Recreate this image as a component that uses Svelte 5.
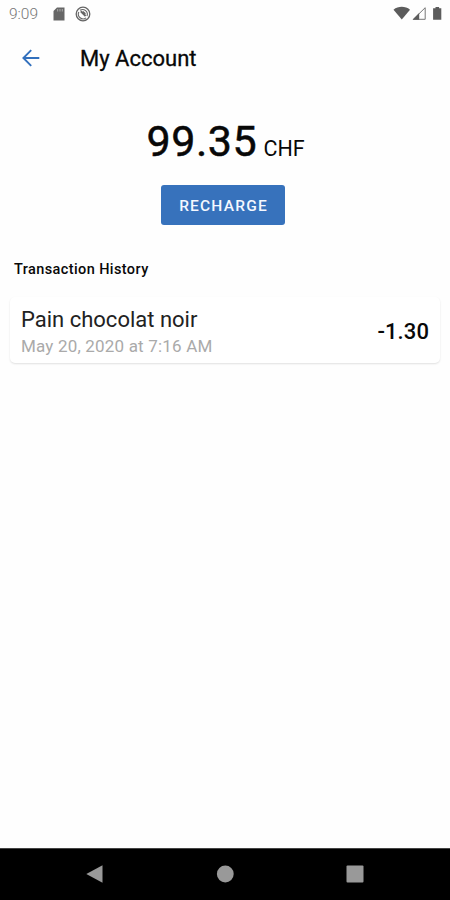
<script lang="ts">
  type Transaction = { title: string; date: string; amount: number };

  export let balance = 99.35;
  export let currency = "CHF";
  export let transactions: Transaction[] = [
    { title: "Pain chocolat noir", date: "May 20, 2020 at 7:16 AM", amount: -1.3 },
  ];
</script>

<div class="screen">
  <div class="status">
    <span class="status__time">9:09</span>
    <svg class="status__card" width="12" height="14" viewBox="0 0 12 14">
      <path d="M4 0.5H11.5V13.5H0.5V4Z" fill="#666" />
      <path d="M4.7 2v2.5M7 2v2.5M9.3 2v2.5" stroke="#aaa" stroke-width="1" />
    </svg>
    <svg class="status__sync" width="16" height="16" viewBox="0 0 16 16" fill="none" stroke="#666">
      <circle cx="8" cy="8" r="6.8" stroke-width="1.3" />
      <path d="M5 4.3a4.8 4.8 0 0 1 7 5.8M11 11.9A4.8 4.8 0 0 1 3.8 6" stroke-width="1.1" />
      <path d="M5.8 5.3l4.8 4.7M7.6 5.7l2.7 2.2" stroke-width="1.9" />
    </svg>
    <svg class="status__signals" width="50" height="16" viewBox="0 0 50 16">
      <path d="M0.5 3.7C5.2-.1 12.3-.1 17 3.7L8.8 13.6Z" fill="#5c5c5c" />
      <path d="M20.4 13.3L32.2 1.7V13.3Z" fill="none" stroke="#777" stroke-width="1" />
      <path d="M19.5 13.8L26.2 7V13.8Z" fill="#5c5c5c" />
      <path d="M42.5 1h3.6v1.3h2.2V13.8h-8.2V2.3h2.4Z" fill="#5c5c5c" />
    </svg>
  </div>

  <header class="header">
    <button class="header__back" aria-label="Back">
      <svg width="18" height="18" viewBox="0 0 18 18" fill="none" stroke="#3270bd" stroke-width="1.9">
        <path d="M17.3 9H2M9.2 1.2L1.4 9l7.8 7.8" />
      </svg>
    </button>
    <h1>My Account</h1>
  </header>

  <main>
    <div class="balance">
      <span class="balance__value">{balance.toFixed(2)}</span>
      <span class="balance__currency">{currency}</span>
    </div>
    <button class="recharge">RECHARGE</button>

    <h2>Transaction History</h2>
    {#each transactions as transaction}
      <div class="card">
        <div>
          <div class="card__title">{transaction.title}</div>
          <div class="card__date">{transaction.date}</div>
        </div>
        <div class="card__amount">{transaction.amount.toFixed(2)}</div>
      </div>
    {/each}
  </main>

  <nav>
    <svg width="18" height="20" viewBox="0 0 18 20"><path d="M0.3 10L16.5 1.2V18.8Z" fill="#999" /></svg>
    <svg width="18" height="20" viewBox="0 0 18 20"><circle cx="9.3" cy="10" r="8.4" fill="#999" /></svg>
    <svg width="18" height="20" viewBox="0 0 18 20"><rect x="0.5" y="1.5" width="17" height="17" rx="1" fill="#999" /></svg>
  </nav>
</div>

<style>
  :global(body) {
    background: #fefefe;
  }

  .screen {
    display: flex;
    flex-direction: column;
    width: 450px;
    height: 900px;
    font-family: Roboto, sans-serif;
    color: #080808;
    background: #fefefe;
  }

  button {
    border: 0;
    padding: 0;
    font-family: inherit;
  }

  .status {
    display: flex;
    align-items: center;
    height: 28px;
    padding: 0 7px 0 9px;
    box-sizing: border-box;
  }

  .status__time {
    width: 44px;
    font-size: 15.5px;
    font-weight: 300;
    color: #777;
  }

  .status__sync {
    margin-left: 10px;
  }

  .status__signals {
    margin-left: auto;
  }

  .header {
    display: flex;
    align-items: center;
    height: 60px;
    padding-left: 22px;
  }

  .header__back {
    display: flex;
    width: 58px;
    background: none;
  }

  h1 {
    margin: 2px 0 0;
    font-size: 22px;
    font-weight: 400;
    line-height: 26px;
    -webkit-text-stroke: 0.3px;
  }

  main {
    display: flex;
    flex: 1;
    flex-direction: column;
    padding: 0 10px;
  }

  .balance {
    display: flex;
    align-items: baseline;
    justify-content: center;
    gap: 6px;
    height: 52px;
    margin-top: 27px;
    padding-left: 1px;
  }

  .balance__value {
    font-size: 43px;
    font-weight: 400;
    line-height: 52px;
    letter-spacing: 0.6px;
    -webkit-text-stroke: 0.5px;
  }

  .balance__currency {
    font-size: 21.5px;
    font-weight: 400;
  }

  .recharge {
    width: 124px;
    height: 40px;
    margin: 18px 0 0 151px;
    padding: 2px 0 0 1px;
    border-radius: 3px;
    background: #3772bc;
    color: #f4f8ff;
    font-size: 15.5px;
    font-weight: 500;
    letter-spacing: 1.2px;
  }

  h2 {
    margin: 36px 0 18px 4px;
    font-size: 14.5px;
    font-weight: 500;
    line-height: 18px;
    letter-spacing: 0.4px;
  }

  .card {
    display: flex;
    align-items: center;
    justify-content: space-between;
    height: 66px;
    padding: 3px 11px 0;
    box-sizing: border-box;
    border-radius: 5px;
    background: #fff;
    box-shadow: 0 1px 2px rgba(0, 0, 0, 0.12);
  }

  .card__title {
    font-size: 22px;
    line-height: 28px;
    color: #222;
  }

  .card__date {
    font-size: 17px;
    line-height: 24px;
    letter-spacing: 0.18px;
    color: #aaa;
  }

  .card__amount {
    font-size: 22px;
    font-weight: 500;
    letter-spacing: 0.1px;
  }

  nav {
    display: flex;
    align-items: center;
    justify-content: space-between;
    height: 52px;
    padding: 0 86px 1px;
    box-sizing: border-box;
    border-top: 1px solid #444;
    background: #000;
  }
</style>
